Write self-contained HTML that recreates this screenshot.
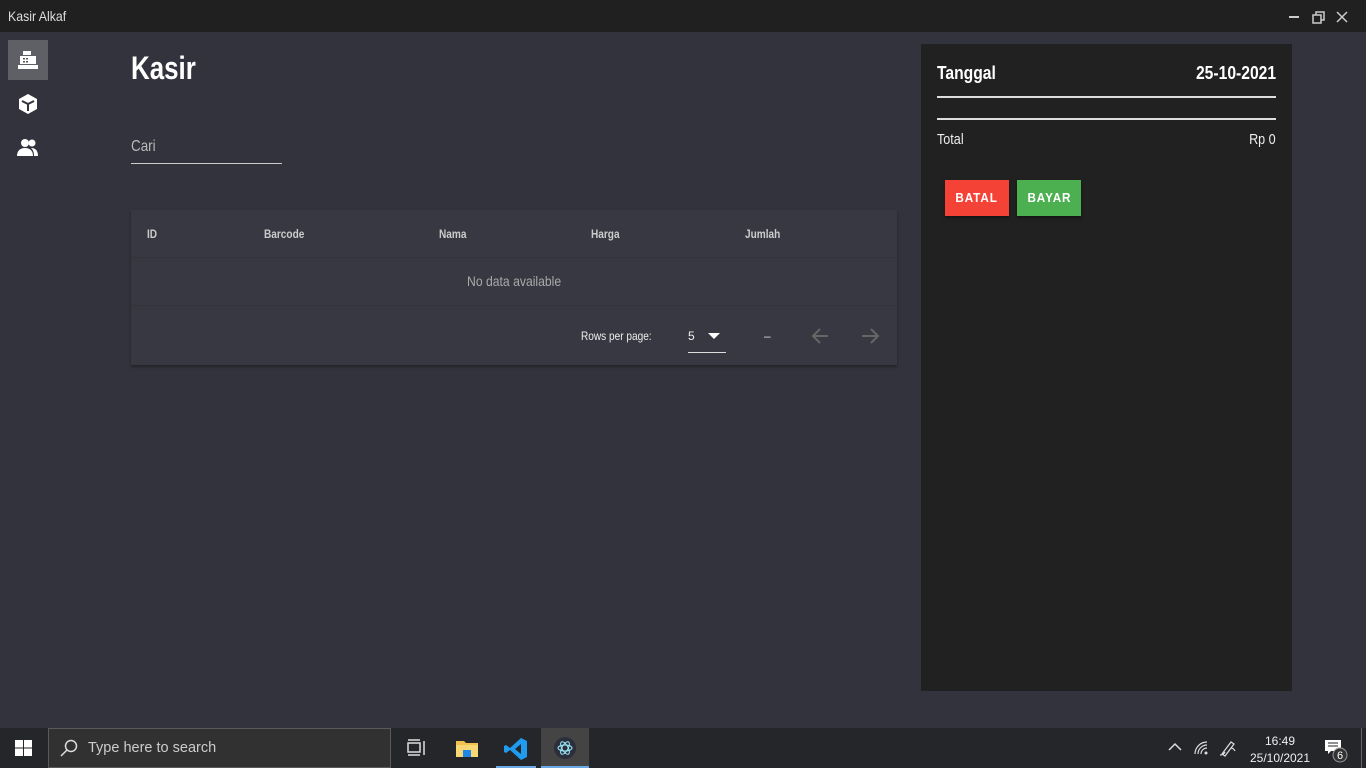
<!DOCTYPE html>
<html><head><meta charset="utf-8">
<style>
*{margin:0;padding:0;box-sizing:border-box}
body{width:1366px;height:768px;overflow:hidden;background:#33333d;font-family:"Liberation Sans",sans-serif;color:#fff;position:relative}
.abs{position:absolute}
.c{display:inline-block;transform:scaleX(.84);transform-origin:0 0;white-space:nowrap}
.cr{display:inline-block;transform:scaleX(.84);transform-origin:100% 0;white-space:nowrap}
.cc{display:inline-block;transform:scaleX(.87);transform-origin:50% 0;white-space:nowrap}
.title{left:0;top:0;width:1366px;height:32px;background:#202020}
.title span{position:absolute;left:8px;top:8px;font-size:14px;color:#ddd}
.card{left:131px;top:210px;width:766px;height:155px;background:#383842;box-shadow:0 2px 3px rgba(0,0,0,.35)}
.th{top:227px;font-size:12px;font-weight:bold;color:#ccc}
.panel{left:921px;top:44px;width:371px;height:647px;background:#212121}
.btn{top:180px;height:36px;font-size:13px;font-weight:bold;letter-spacing:1px;text-align:center;line-height:36px;box-shadow:0 2px 3px rgba(0,0,0,.4)}
.task{left:0;top:728px;width:1366px;height:40px;background:#252629}
</style></head><body>
<div class="abs title"><span class="c" style="transform:scaleX(.88)">Kasir Alkaf</span>
<svg class="abs" style="left:1288px;top:10px" width="68" height="14"><rect x="1" y="6" width="10" height="2" fill="#ccc"/><rect x="28" y="2" width="8" height="8" fill="none" stroke="#ccc" stroke-width="1.5"/><rect x="25" y="5" width="8" height="8" fill="#202020" stroke="#ccc" stroke-width="1.5"/><path d="M49 2l10 10M59 2L49 12" stroke="#ccc" stroke-width="1.5"/></svg>
</div>
<div class="abs" style="left:8px;top:40px;width:40px;height:40px;background:#5f5f66"></div>
<svg class="abs" style="left:18px;top:50px" width="22" height="20"><rect x="5" y="1" width="8" height="4" fill="#fff"/><rect x="2" y="6" width="16" height="8" fill="#fff"/><rect x="5" y="8" width="2" height="1.5" fill="#555"/><rect x="8" y="8" width="2" height="1.5" fill="#555"/><rect x="5" y="11" width="2" height="1.5" fill="#555"/><rect x="8" y="11" width="2" height="1.5" fill="#555"/><rect x="0" y="15" width="20" height="4" fill="#fff"/></svg>
<svg class="abs" style="left:17px;top:93px" width="22" height="22"><path d="M11 1l9 5v10l-9 5-9-5V6z" fill="#fff"/><path d="M5 8l6 3 6-3M11 11v7" stroke="#33333d" stroke-width="2" fill="none"/></svg>
<svg class="abs" style="left:17px;top:138px" width="22" height="20"><circle cx="8" cy="5" r="4" fill="#fff"/><circle cx="15" cy="5" r="3.5" fill="#fff"/><path d="M0 18c0-6 4-8 8-8s8 2 8 8z" fill="#fff"/><path d="M14 10c4 0 7 2 7 8h-4c0-4-1-6-3-8z" fill="#fff"/></svg>
<div class="abs" style="left:131px;top:50px;font-size:32px;font-weight:bold"><span class="c" style="transform:scaleX(.81)">Kasir</span></div>
<div class="abs" style="left:131px;top:138px;font-size:16px;color:#bbb"><span class="c">Cari</span></div>
<div class="abs" style="left:131px;top:163px;width:151px;height:1px;background:#ccc"></div>
<div class="abs card"></div>
<div class="abs th" style="left:147px"><span class="c">ID</span></div>
<div class="abs th" style="left:264px"><span class="c">Barcode</span></div>
<div class="abs th" style="left:439px"><span class="c">Nama</span></div>
<div class="abs th" style="left:591px"><span class="c">Harga</span></div>
<div class="abs th" style="left:745px"><span class="c">Jumlah</span></div>
<div class="abs" style="left:131px;top:257px;width:766px;height:1px;background:#33333b"></div>
<div class="abs" style="left:131px;top:305px;width:766px;height:1px;background:#33333b"></div>
<div class="abs" style="left:131px;top:273px;width:766px;text-align:center;font-size:14px;color:#aaa"><span class="cc">No data available</span></div>
<div class="abs" style="left:581px;top:329px;font-size:12px;color:#eee"><span class="c">Rows per page:</span></div>
<div class="abs" style="left:688px;top:329px;font-size:12px;color:#eee">5</div>
<svg class="abs" style="left:708px;top:333px" width="12" height="6"><path d="M0 0h12L6 6z" fill="#fff"/></svg>
<div class="abs" style="left:688px;top:352px;width:38px;height:1px;background:#ddd"></div>
<div class="abs" style="left:764px;top:329px;font-size:12px;color:#ddd">–</div>
<svg class="abs" style="left:811px;top:327px" width="70" height="18"><path d="M17 9H3M9 2L2 9l7 7" stroke="#666" stroke-width="2" fill="none"/><path d="M51 9h15M60 2l7 7-7 7" stroke="#666" stroke-width="2" fill="none"/></svg>
<div class="abs panel"></div>
<div class="abs" style="left:937px;top:63px;font-size:18px;font-weight:bold"><span class="c" style="transform:scaleX(.87)">Tanggal</span></div>
<div class="abs" style="left:1100px;top:63px;width:176px;text-align:right;font-size:18px;font-weight:bold"><span class="cr" style="transform:scaleX(.87)">25-10-2021</span></div>
<div class="abs" style="left:937px;top:96px;width:339px;height:2px;background:#ddd"></div>
<div class="abs" style="left:937px;top:118px;width:339px;height:2px;background:#ddd"></div>
<div class="abs" style="left:937px;top:131px;font-size:15px;color:#eee"><span class="c">Total</span></div>
<div class="abs" style="left:1176px;top:131px;width:100px;text-align:right;font-size:15px;color:#eee"><span class="cr">Rp 0</span></div>
<div class="abs btn" style="left:945px;width:64px;background:#f44336"><span class="cc" style="transform:scaleX(.9)">BATAL</span></div>
<div class="abs btn" style="left:1017px;width:64px;background:#4caf50"><span class="cc" style="transform:scaleX(.9)">BAYAR</span></div>
<div class="abs task"></div>
<svg class="abs" style="left:15px;top:740px" width="18" height="17"><rect x="0" y="0" width="8" height="7.5" fill="#fff"/><rect x="9" y="0" width="8" height="7.5" fill="#fff"/><rect x="0" y="8.5" width="8" height="7.5" fill="#fff"/><rect x="9" y="8.5" width="8" height="7.5" fill="#fff"/></svg>
<div class="abs" style="left:48px;top:728px;width:343px;height:40px;background:#313131;border:1px solid #5a5a5a"></div>
<svg class="abs" style="left:60px;top:739px" width="18" height="18"><circle cx="11" cy="7" r="5.5" stroke="#ddd" stroke-width="1.5" fill="none"/><path d="M7 11l-6 6" stroke="#ddd" stroke-width="1.5"/></svg>
<div class="abs" style="left:88px;top:740px;font-size:14.5px;color:#ccc">Type here to search</div>
<svg class="abs" style="left:407px;top:739px" width="20" height="18"><rect x="1" y="4" width="12" height="9" fill="none" stroke="#ddd" stroke-width="1.5"/><path d="M1 1h12M1 16h12M17 2v14" stroke="#ddd" stroke-width="1.5"/></svg>
<svg class="abs" style="left:456px;top:739px" width="22" height="18"><path d="M0 2h8l2 2h12v14H0z" fill="#f2c14e"/><rect x="0" y="6" width="22" height="12" fill="#f8d775"/><rect x="7" y="11" width="8" height="7" fill="#1e88e5"/></svg>
<svg class="abs" style="left:504px;top:737px" width="24" height="24"><path d="M17 1l6 3v16l-6 3L6 13l-4 3-2-1V9l2-1 4 3zM17 7l-6 5 6 5z" fill="#1f9cf0"/></svg>
<div class="abs" style="left:496px;top:766px;width:40px;height:2px;background:#6aa9e6"></div>
<div class="abs" style="left:541px;top:728px;width:48px;height:40px;background:#444"></div>
<div class="abs" style="left:541px;top:766px;width:48px;height:2px;background:#6aa9e6"></div>
<svg class="abs" style="left:553px;top:736px" width="24" height="24"><circle cx="12" cy="12" r="11" fill="#2b2e3b"/><ellipse cx="12" cy="12" rx="7" ry="3" fill="none" stroke="#9feaf9" stroke-width="1"/><ellipse cx="12" cy="12" rx="7" ry="3" fill="none" stroke="#9feaf9" stroke-width="1" transform="rotate(60 12 12)"/><ellipse cx="12" cy="12" rx="7" ry="3" fill="none" stroke="#9feaf9" stroke-width="1" transform="rotate(-60 12 12)"/></svg>
<svg class="abs" style="left:1168px;top:742px" width="14" height="10"><path d="M1 8l6-6 6 6" stroke="#ddd" stroke-width="1.5" fill="none"/></svg>
<svg class="abs" style="left:1193px;top:740px" width="16" height="16"><path d="M2 14a12 12 0 0 1 12-12M5 14a9 9 0 0 1 9-9M8 14a6 6 0 0 1 6-6" stroke="#ddd" stroke-width="1.2" fill="none"/><circle cx="13" cy="13" r="1.5" fill="#ddd"/></svg>
<svg class="abs" style="left:1219px;top:739px" width="18" height="18"><path d="M3 15l9-12 3 2-9 12zM1 16c2 0 4-1 5-3M12 9c2 0 3 1 4 3" stroke="#ddd" stroke-width="1.2" fill="none"/></svg>
<div class="abs" style="left:1240px;top:733px;width:80px;text-align:center;font-size:12px;color:#eee;line-height:17px">16:49<br>25/10/2021</div>
<svg class="abs" style="left:1324px;top:738px" width="26" height="26"><path d="M1 2h16v11H7l-3 3v-3H1z" fill="#fff"/><path d="M4 5h10M4 8h10" stroke="#252629"/><circle cx="16" cy="17" r="7" fill="#333" stroke="#999"/><text x="16" y="21" font-size="11" fill="#fff" text-anchor="middle" font-family="Liberation Sans">6</text></svg>
<div class="abs" style="left:1361px;top:728px;width:1px;height:40px;background:#666"></div>
</body></html>
